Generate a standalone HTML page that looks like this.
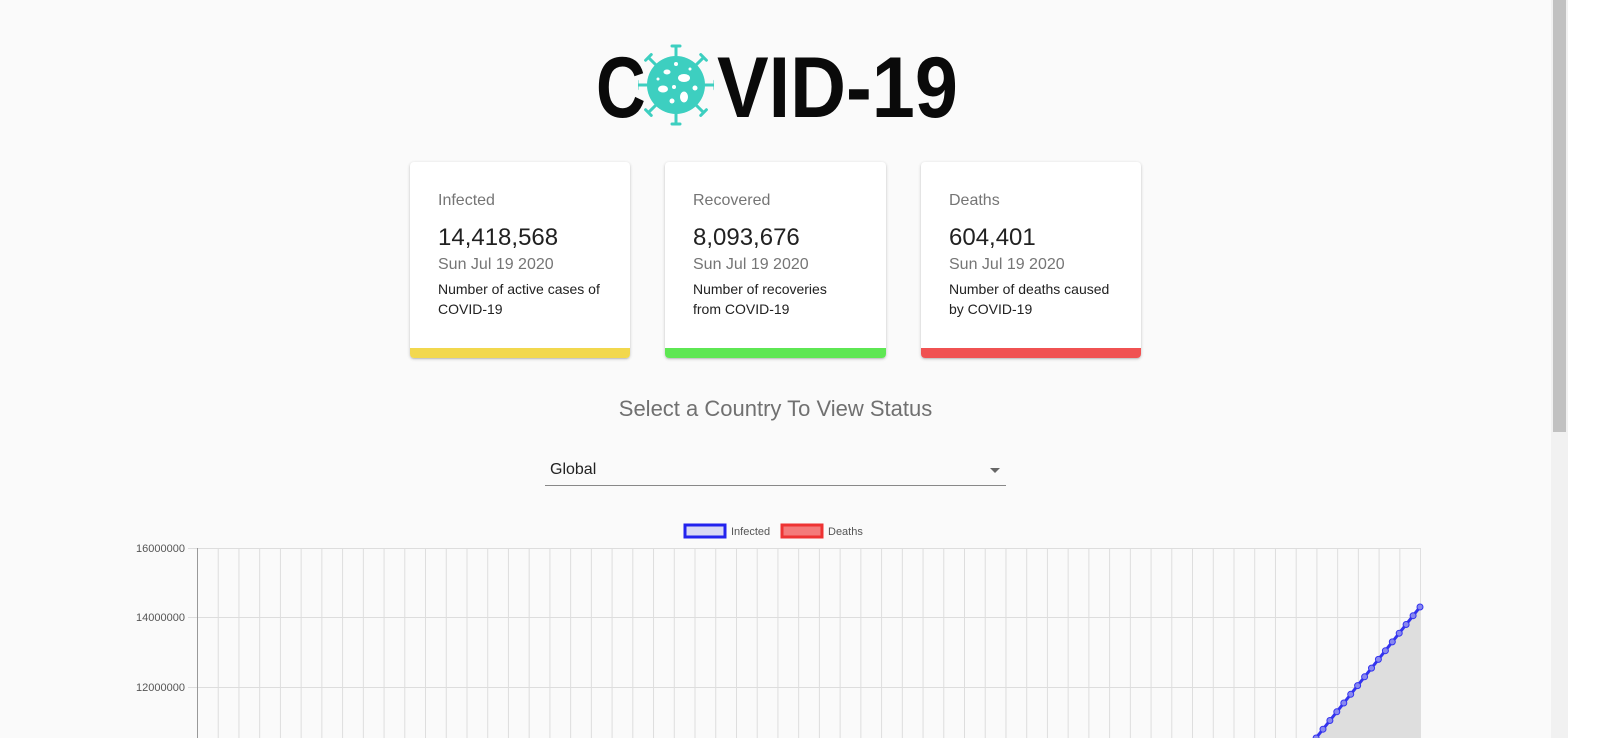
<!DOCTYPE html>
<html><head><meta charset="utf-8"><style>
*{margin:0;padding:0;box-sizing:border-box}
html,body{width:1600px;height:738px;overflow:hidden;background:#fafafa;font-family:"Liberation Sans",Arial,sans-serif}
.sb{position:absolute;left:1551px;top:0;width:17px;height:738px;background:#f1f1f1}
.sb div{position:absolute;left:2px;top:0;width:13px;height:432px;background:#c1c1c1}
.rw{position:absolute;left:1568px;top:0;width:32px;height:738px;background:#fff}
.logo{position:absolute;font-weight:bold;font-size:86px;color:#0a0a0a;top:38px;line-height:100px;transform-origin:0 0;transform:scaleX(0.8)}
.card{position:absolute;top:162px;width:220px;height:196px;background:#fff;border-radius:4px;box-shadow:0 1px 3px rgba(0,0,0,.2),0 1px 1px rgba(0,0,0,.1);overflow:hidden}
.card .in{padding:30px 28px}
.t{font-size:16px;color:#757575;line-height:18px}
.n{font-size:24px;color:#212121;margin-top:14px;line-height:28px}
.d{font-size:16px;color:#757575;margin-top:2px;line-height:22px}
.x{font-size:14px;color:#212121;margin-top:3px;line-height:20px}
.bar{position:absolute;left:0;bottom:0;width:100%;height:10px}
.h{position:absolute;top:396px;left:0;width:1551px;text-align:center;font-size:22px;color:#707070}
.sel{position:absolute;left:545px;top:458px;width:461px;height:28px;border-bottom:1px solid #888;font-size:16px;color:#222;padding-left:5px;line-height:24px}
.sel:after{content:"";position:absolute;right:6px;top:10px;border-left:5px solid transparent;border-right:5px solid transparent;border-top:5px solid #666}
</style></head><body>
<div class="logo" style="left:596px">C</div>
<div class="logo" style="left:717px;transform:scaleX(0.9)">VID-19</div>
<svg style="position:absolute;left:638px;top:43px" width="76" height="84" viewBox="0 0 76 84">
<g fill="#3dcfc0" stroke="#3dcfc0" stroke-width="3" stroke-linecap="round">
<circle cx="38" cy="42" r="29" stroke="none"/>
<g id="s"><line x1="38" y1="14" x2="38" y2="4"/><line x1="34" y1="3" x2="42" y2="3"/></g>
<use href="#s" transform="rotate(45 38 42)"/><use href="#s" transform="rotate(90 38 42)"/><use href="#s" transform="rotate(135 38 42)"/>
<use href="#s" transform="rotate(180 38 42)"/><use href="#s" transform="rotate(225 38 42)"/><use href="#s" transform="rotate(270 38 42)"/><use href="#s" transform="rotate(315 38 42)"/>
</g>
<g fill="#fff"><ellipse cx="46" cy="35" rx="6" ry="4"/><ellipse cx="29" cy="29" rx="3.5" ry="2.5"/><ellipse cx="25" cy="46" rx="5" ry="3.5"/><ellipse cx="46" cy="54" rx="4" ry="5.5"/><circle cx="38" cy="21" r="2"/><circle cx="57" cy="45" r="2.5"/><circle cx="34" cy="58" r="2.5"/><circle cx="36" cy="44" r="2"/><circle cx="52" cy="26" r="1.5"/><circle cx="20" cy="36" r="1.5"/></g>
</svg>
<div class="card" style="left:410px"><div class="in"><div class="t">Infected</div><div class="n">14,418,568</div><div class="d">Sun Jul 19 2020</div><div class="x">Number of active cases of COVID-19</div></div><div class="bar" style="background:#f2d84e"></div></div>
<div class="card" style="left:665px;width:221px"><div class="in"><div class="t">Recovered</div><div class="n">8,093,676</div><div class="d">Sun Jul 19 2020</div><div class="x">Number of recoveries<br>from COVID-19</div></div><div class="bar" style="background:#5ee753"></div></div>
<div class="card" style="left:921px"><div class="in"><div class="t">Deaths</div><div class="n">604,401</div><div class="d">Sun Jul 19 2020</div><div class="x">Number of deaths caused<br>by COVID-19</div></div><div class="bar" style="background:#f05252"></div></div>
<div class="h">Select a Country To View Status</div>
<div class="sel">Global</div>
<svg style="position:absolute;left:0;top:0" width="1551" height="738">
<defs><pattern id="g" x="197" y="0" width="20.73" height="738" patternUnits="userSpaceOnUse"><line x1="0.5" y1="0" x2="0.5" y2="738" stroke="#ddd" stroke-width="1"/></pattern></defs>
<rect x="197" y="548" width="1224" height="190" fill="url(#g)"/>
<g stroke="#ddd"><line x1="188" y1="548.5" x2="1421" y2="548.5"/><line x1="188" y1="617.5" x2="1421" y2="617.5"/><line x1="188" y1="687.5" x2="1421" y2="687.5"/></g>
<line x1="197.5" y1="548" x2="197.5" y2="738" stroke="#999"/>
<g font-size="11" fill="#555" text-anchor="end"><text x="185" y="552">16000000</text><text x="185" y="621">14000000</text><text x="185" y="691">12000000</text></g>
<polygon points="1316,738 1420,607 1420,738" fill="#dedede"/>
<polyline points="1316,738 1420,607" stroke="#3333ee" stroke-width="3" fill="none"/>
<g fill="#8888f0" stroke="#3333ee" stroke-width="1">
<circle cx="1420" cy="607" r="3"/><circle cx="1413.1" cy="615.7" r="3"/><circle cx="1406.1" cy="624.5" r="3"/><circle cx="1399.2" cy="633.2" r="3"/><circle cx="1392.3" cy="641.9" r="3"/><circle cx="1385.4" cy="650.7" r="3"/><circle cx="1378.4" cy="659.4" r="3"/><circle cx="1371.5" cy="668.1" r="3"/><circle cx="1364.6" cy="676.8" r="3"/><circle cx="1357.6" cy="685.6" r="3"/><circle cx="1350.7" cy="694.3" r="3"/><circle cx="1343.8" cy="703" r="3"/><circle cx="1336.8" cy="711.8" r="3"/><circle cx="1329.9" cy="720.5" r="3"/><circle cx="1323" cy="729.2" r="3"/><circle cx="1316.1" cy="738" r="3"/></g>
<rect x="685" y="525" width="40" height="12" fill="#d8d8f4" stroke="#2222ee" stroke-width="3"/>
<text x="731" y="535" font-size="11" fill="#555">Infected</text>
<rect x="782" y="525" width="40" height="12" fill="#f47a7a" stroke="#e33" stroke-width="3"/>
<text x="828" y="535" font-size="11" fill="#555">Deaths</text>
</svg>
<div class="sb"><div></div></div><div class="rw"></div>
</body></html>
